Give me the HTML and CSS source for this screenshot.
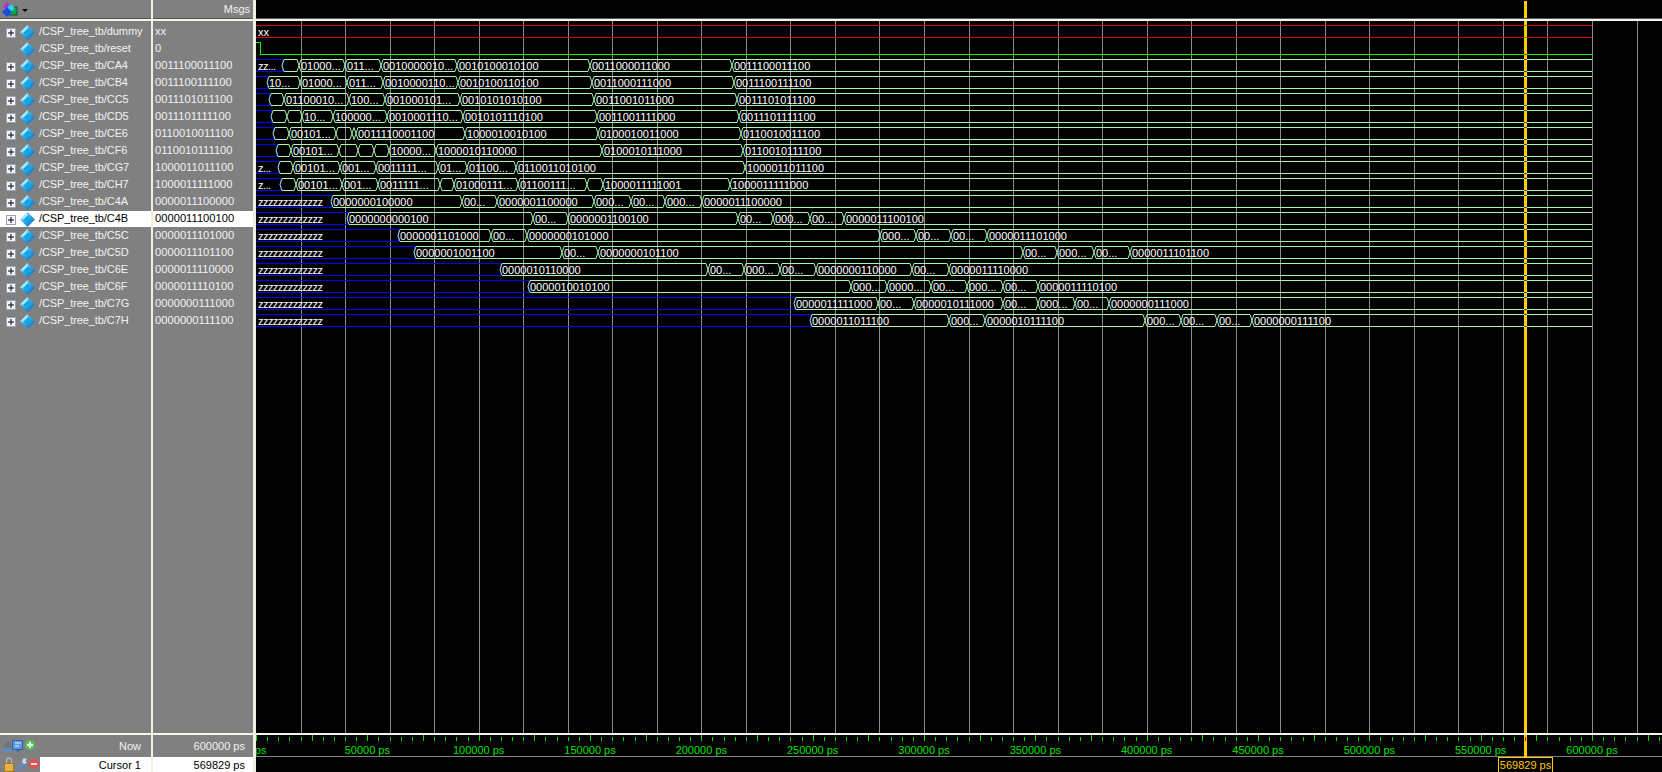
FILE: index.html
```html
<!DOCTYPE html>
<html>
<head>
<meta charset="utf-8">
<title>Wave</title>
<link rel="stylesheet" href="styles.css">
</head>
<body>

<svg class="defs" width="0" height="0">
  <defs>
    <linearGradient id="gem" x1="0" y1="0" x2="1" y2="1">
      <stop offset="0" stop-color="#9be8ff"/>
      <stop offset="0.5" stop-color="#2aa6e8"/>
      <stop offset="1" stop-color="#0a5fb0"/>
    </linearGradient>
    <symbol id="diamond" viewBox="0 0 15 15">
      <path d="M7.5 0 15 7.5 7.5 15 0 7.5z" fill="url(#gem)"/>
      <path d="M7.5 3.5 11.5 7.5 7.5 11.5 3.5 7.5z" fill="#19a4e4"/>
      <path d="M7.5 0 0 7.5 3.5 7.5 7.5 3.5z" fill="#a6ecff"/>
    </symbol>
    <symbol id="plus" viewBox="0 0 10 10">
      <rect x="0.5" y="0.5" width="9" height="9" fill="#f4f6fb" stroke="#9aa0b4"/>
      <path d="M2 5h6M5 2v6" stroke="#000" fill="none"/>
    </symbol>
  </defs>
</svg>

<div class="window">

  <div class="col names">
    <div class="head">
      <svg class="logo" width="18" height="18" viewBox="0 0 18 18">
        <rect x="8" y="6" width="8" height="8" fill="#18a050" stroke="#0a5a28"/>
        <path d="M6 1 11 6 6 9 2 6z" fill="#b030d0"/>
        <circle cx="10" cy="7" r="3" fill="#20d8f0"/>
        <path d="M6 6 11 11 6 16 1 11z" fill="#1a50e0"/>
      </svg>
      <span class="caret"></span>
    </div>
    <div class="list">
      <div class="row"><svg class="plus"><use href="#plus"/></svg><svg class="sig"><use href="#diamond"/></svg>/CSP_tree_tb/dummy</div>
      <div class="row"><span class="noplus"></span><svg class="sig"><use href="#diamond"/></svg>/CSP_tree_tb/reset</div>
      <div class="row"><svg class="plus"><use href="#plus"/></svg><svg class="sig"><use href="#diamond"/></svg>/CSP_tree_tb/CA4</div>
      <div class="row"><svg class="plus"><use href="#plus"/></svg><svg class="sig"><use href="#diamond"/></svg>/CSP_tree_tb/CB4</div>
      <div class="row"><svg class="plus"><use href="#plus"/></svg><svg class="sig"><use href="#diamond"/></svg>/CSP_tree_tb/CC5</div>
      <div class="row"><svg class="plus"><use href="#plus"/></svg><svg class="sig"><use href="#diamond"/></svg>/CSP_tree_tb/CD5</div>
      <div class="row"><svg class="plus"><use href="#plus"/></svg><svg class="sig"><use href="#diamond"/></svg>/CSP_tree_tb/CE6</div>
      <div class="row"><svg class="plus"><use href="#plus"/></svg><svg class="sig"><use href="#diamond"/></svg>/CSP_tree_tb/CF6</div>
      <div class="row"><svg class="plus"><use href="#plus"/></svg><svg class="sig"><use href="#diamond"/></svg>/CSP_tree_tb/CG7</div>
      <div class="row"><svg class="plus"><use href="#plus"/></svg><svg class="sig"><use href="#diamond"/></svg>/CSP_tree_tb/CH7</div>
      <div class="row"><svg class="plus"><use href="#plus"/></svg><svg class="sig"><use href="#diamond"/></svg>/CSP_tree_tb/C4A</div>
      <div class="row selected"><svg class="plus"><use href="#plus"/></svg><svg class="sig"><use href="#diamond"/></svg>/CSP_tree_tb/C4B</div>
      <div class="row"><svg class="plus"><use href="#plus"/></svg><svg class="sig"><use href="#diamond"/></svg>/CSP_tree_tb/C5C</div>
      <div class="row"><svg class="plus"><use href="#plus"/></svg><svg class="sig"><use href="#diamond"/></svg>/CSP_tree_tb/C5D</div>
      <div class="row"><svg class="plus"><use href="#plus"/></svg><svg class="sig"><use href="#diamond"/></svg>/CSP_tree_tb/C6E</div>
      <div class="row"><svg class="plus"><use href="#plus"/></svg><svg class="sig"><use href="#diamond"/></svg>/CSP_tree_tb/C6F</div>
      <div class="row"><svg class="plus"><use href="#plus"/></svg><svg class="sig"><use href="#diamond"/></svg>/CSP_tree_tb/C7G</div>
      <div class="row"><svg class="plus"><use href="#plus"/></svg><svg class="sig"><use href="#diamond"/></svg>/CSP_tree_tb/C7H</div>
    </div>
    <div class="foot">
      <div class="now">
        <svg class="tools" width="36" height="16" viewBox="0 0 36 16">
          <path d="M3 10 5 5 8 3 11 6 12 10z" fill="#6d7480"/>
          <path d="M2 12.5h10" stroke="#4a90e0" stroke-width="2"/>
          <rect x="12.5" y="2.5" width="10" height="9" fill="#5a9ae0" stroke="#2c62b0"/>
          <path d="M15 5h6M15 8h4" stroke="#e8f0ff"/>
          <path d="M16 12l2 2 2-2z" fill="#2c62b0"/>
          <circle cx="30" cy="7" r="5" fill="#58c058"/>
          <path d="M27 7h6M30 4v6" stroke="#dcf5dc" stroke-width="2"/>
        </svg>
        <span class="now-label">Now</span>
      </div>
      <div class="cur">
        <svg class="tools" width="40" height="15" viewBox="0 0 40 15">
          <rect x="4.5" y="6.5" width="9" height="8" fill="#e8b040" stroke="#a87820"/>
          <path d="M6.5 6V3.5a2.5 2.5 0 0 1 5 0V6" fill="none" stroke="#b0b0b0" stroke-width="1.5"/>
          <path d="M18 13 24 6" stroke="#5a8ad8" stroke-width="3"/>
          <path d="M23 1.5h4L25.5 4l1.5 2-3 1-2-2z" fill="#c8d8f0"/>
          <circle cx="34" cy="7" r="5" fill="#e05050"/>
          <path d="M31 7h6" stroke="#f8dcdc" stroke-width="2"/>
        </svg>
        <span class="cur-label">Cursor 1</span>
      </div>
    </div>
  </div>

  <div class="col values">
    <div class="head msgs">Msgs</div>
    <div class="list">
      <div class="row">xx</div>
      <div class="row">0</div>
      <div class="row">0011100011100</div>
      <div class="row">0011100111100</div>
      <div class="row">0011101011100</div>
      <div class="row">0011101111100</div>
      <div class="row">0110010011100</div>
      <div class="row">0110010111100</div>
      <div class="row">1000011011100</div>
      <div class="row">1000011111000</div>
      <div class="row">0000011100000</div>
      <div class="row selected">0000011100100</div>
      <div class="row">0000011101000</div>
      <div class="row">0000011101100</div>
      <div class="row">0000011110000</div>
      <div class="row">0000011110100</div>
      <div class="row">0000000111000</div>
      <div class="row">0000000111100</div>
    </div>
    <div class="foot">
      <div class="now"><span class="now-label">600000 ps</span></div>
      <div class="cur"><span class="cur-label">569829 ps</span></div>
    </div>
  </div>

  <div class="col wave">
    <div class="head"></div>
    <svg id="waves" class="waves" viewBox="256 21 1406 712"></svg>
    <div class="rule"></div>
    <svg id="ruler" class="ruler" viewBox="256 735 1406 37"></svg>
  </div>

  <div class="cursor"></div>
  <div class="flag">569829 ps</div>
</div>

<script src="waves.js"></script>
</body>
</html>
```

FILE: styles.css
```css
*{
  box-sizing:border-box;
}

body{
  margin:0;
  background:#000000;
  font-family:"Liberation Sans",Arial,sans-serif;
  font-size:11px;
  overflow:hidden;
}

.defs{
  position:absolute;
}

.window{
  position:relative;
  display:grid;
  grid-template-columns:151px 2px 100px 3px 1fr;
  width:1662px;
  height:772px;
  background:#f0efe2;
}

.col{
  display:flex;
  flex-direction:column;
  height:772px;
}

.names{
  grid-column:1;
  background:#808080;
  color:#f2f2f2;
}

.values{
  grid-column:3;
  background:#808080;
  color:#f2f2f2;
}

.wave{
  grid-column:5;
  background:#000000;
}

.head{
  display:flex;
  align-items:center;
  height:21px;
  border-bottom:2px solid #f4f4ec;
  box-shadow:inset 0 -1px 0 #555555;
}

.wave .head{
  position:relative;
  z-index:2;
}

.logo{
  margin-left:1px;
}

.caret{
  width:0;
  height:0;
  margin:2px 0 0 3px;
  border-left:3px solid transparent;
  border-right:3px solid transparent;
  border-top:3px solid #000000;
}

.msgs{
  justify-content:flex-end;
  padding:0 3px 2px 0;
  font-size:11px;
}

.list{
  flex:1;
  padding-top:3px;
}

.row{
  display:flex;
  align-items:center;
  height:17px;
  padding-bottom:3px;
  line-height:14px;
  white-space:nowrap;
}

.names .row{
  font-size:11px;
  letter-spacing:-0.1px;
}

.plus{
  flex:none;
  width:10px;
  height:10px;
  margin:4px 0 0 6px;
}

.noplus{
  flex:none;
  width:16px;
}

.sig{
  flex:none;
  width:15px;
  height:15px;
  margin:2px 4px 0 4px;
}

.values .row{
  padding-left:2px;
  font-size:11.2px;
}

.row.selected{
  background:linear-gradient(#ffffff,#ffffff) no-repeat 0 0/100% 16px;
  color:#000000;
}

.foot{
  height:39px;
  border-top:2px solid #f4f4ec;
}

.now{
  display:flex;
  align-items:center;
  justify-content:space-between;
  height:22px;
  padding-right:10px;
}

.cur{
  display:flex;
  align-items:center;
  justify-content:space-between;
  height:15px;
  padding-right:10px;
  background:#808080;
}

.names .cur{
  background:linear-gradient(to right,#808080 40px,#ffffff 40px);
  color:#000000;
}

.values .cur{
  background:#ffffff;
  color:#000000;
}

.values .now,
.values .cur{
  justify-content:flex-end;
  padding-right:8px;
}

.tools{
  flex:none;
}

.waves{
  position:relative;
  z-index:2;
  display:block;
  flex:none;
  width:1406px;
  height:712px;
}

.rule{
  position:relative;
  z-index:2;
  flex:none;
  height:2px;
  background:#f4f4ec;
}

.ruler{
  display:block;
  flex:none;
  width:1406px;
  height:37px;
}

.waves text,
.ruler text{
  font-family:"Liberation Sans",Arial,sans-serif;
}

.cursor{
  position:absolute;
  z-index:1;
  left:1524px;
  top:1px;
  width:3px;
  height:756px;
  background:#ffcc00;
}

.cursor::after{
  content:"";
  position:absolute;
  left:1px;
  top:736px;
  width:1px;
  height:4px;
  background:#e00000;
}

.flag{
  position:absolute;
  z-index:1;
  left:1498px;
  top:757px;
  width:55px;
  height:15px;
  border:1px solid #ffcc00;
  border-bottom:0;
  color:#ffcc00;
  font-size:11px;
  line-height:14px;
  text-align:center;
}
```

FILE: waves.js
```js
// waveform data, x values are page pixels
var X0 = 256, X1 = 1592, PX = 1336 / 600000;
var ROW = 17, TOP = 25, H = 12;

// [row, end of z, z label, [next edge, label], ...]; the last label runs to the end
var buses = [
  [2, 282, "zz...", [299,""], [345,"01000..."], [381,"011..."], [457,"0010000010..."], [590,"0010100010100"], [732,"0011000011000"], [X1,"0011100011100"]],
  [3, 267, "", [300,"10..."], [347,"01000..."], [383,"011..."], [458,"0010000110..."], [592,"0010100110100"], [734,"0011000111000"], [X1,"0011100111100"]],
  [4, 269, "", [284,""], [349,"01100010..."], [385,"100..."], [460,"001000101..."], [594,"0010101010100"], [737,"0011001011000"], [X1,"0011101011100"]],
  [5, 271, "", [287,""], [302,""], [333,"10..."], [387,"100000..."], [463,"0010001110..."], [597,"0010101110100"], [739,"0011001111000"], [X1,"0011101111100"]],
  [6, 273, "", [289,""], [336,"00101..."], [352,""], [356,""], [465,"0011110001100"], [598,"1000010010100"], [741,"0100010011000"], [X1,"0110010011100"]],
  [7, 276, "", [291,""], [339,"00101..."], [358,""], [374,""], [389,""], [436,"10000..."], [602,"1000010110000"], [743,"0100010111000"], [X1,"0110010111100"]],
  [8, 278, "z...", [293,""], [340,"00101..."], [376,"001..."], [438,"0011111..."], [467,"01..."], [516,"01100..."], [745,"0110011010100"], [X1,"1000011011100"]],
  [9, 280, "z...", [296,""], [342,"00101..."], [378,"001..."], [440,"0011111..."], [454,""], [518,"01000111..."], [587,"01100111..."], [603,""], [730,"1000011111001"], [X1,"1000011111000"]],
  [10, 331, "zzzzzzzzzzzzz", [462,"0000000100000"], [497,"00..."], [594,"0000001100000"], [631,"000..."], [665,"00..."], [702,"000..."], [X1,"0000011100000"]],
  [11, 347, "zzzzzzzzzzzzz", [533,"0000000000100"], [568,"00..."], [738,"0000001100100"], [773,"00..."], [810,"000..."], [844,"00..."], [X1,"0000011100100"]],
  [12, 398, "zzzzzzzzzzzzz", [491,"0000001101000"], [527,"00..."], [880,"0000000101000"], [916,"000..."], [951,"00..."], [987,"00..."], [X1,"0000011101000"]],
  [13, 414, "zzzzzzzzzzzzz", [562,"0000001001100"], [598,"00..."], [1023,"0000000101100"], [1057,"00..."], [1094,"000..."], [1130,"00..."], [X1,"0000011101100"]],
  [14, 500, "zzzzzzzzzzzzz", [708,"0000010110000"], [744,"00..."], [780,"000..."], [816,"00..."], [912,"0000000110000"], [949,"00..."], [X1,"0000011110000"]],
  [15, 528, "zzzzzzzzzzzzz", [851,"0000010010100"], [887,"000..."], [931,"0000..."], [967,"00..."], [1003,"000..."], [1038,"00..."], [X1,"0000011110100"]],
  [16, 794, "zzzzzzzzzzzzz", [878,"0000011111000"], [914,"00..."], [1003,"0000010111000"], [1038,"00..."], [1075,"000..."], [1109,"00..."], [X1,"0000000111000"]],
  [17, 810, "zzzzzzzzzzzzz", [949,"0000011011100"], [985,"000..."], [1145,"0000010111100"], [1181,"000..."], [1217,"00..."], [1252,"00..."], [X1,"0000000111100"]]
];

var waves = "", ruler = "";

function line(x1, y1, x2, y2, color){
  return '<path d="M' + x1 + ' ' + y1 + 'L' + x2 + ' ' + y2 + '" stroke="' + color + '" fill="none" shape-rendering="crispEdges"/>';
}

function label(x, y, s){
  if(s == "") return "";
  var tight = s.charAt(0) == "z" ? ' letter-spacing="-0.55"' : '';
  return '<text x="' + x + '" y="' + y + '" font-size="11"' + tight + ' fill="#ffffff">' + s + '</text>';
}

function edge(d){
  return '<path d="' + d + '" stroke="#aaf5aa" fill="none"/>';
}

// grid lines every 20000 ps
for(var k = 1; k <= 31; k++){
  var gx = Math.round(X0 + k * 20000 * PX) + 0.5;
  waves += line(gx, 21, gx, 733, "#8c8c8c");
}

// dummy and reset
waves += line(X0, 25.5, X1, 25.5, "#e00000") + line(X0, 37.5, X1, 37.5, "#e00000") + label(258, 36, "xx");
waves += '<path d="M256 42.5H260.5V54.5H' + X1 + '" stroke="#00ff00" fill="none" shape-rendering="crispEdges"/>';

for(var i = 0; i < buses.length; i++){
  var b = buses[i];
  var yTop = TOP + b[0] * ROW + 0.5, yBot = yTop + H, yMid = yTop + H / 2;

  waves += '<path d="M' + X0 + ' ' + yTop + 'H' + b[1] + 'V' + yBot + 'H' + X0 + '" stroke="#0000ff" fill="none" shape-rendering="crispEdges"/>';
  waves += label(258, yBot - 1.5, b[2]);

  var a = b[1];
  for(var j = 3; j < b.length; j++){
    var e = b[j][0];
    if(e == X1){
      waves += edge('M' + a + ' ' + yMid + 'L' + (a + 2) + ' ' + yTop + 'H' + e + 'M' + e + ' ' + yBot + 'H' + (a + 2) + 'L' + a + ' ' + yMid);
    }else{
      waves += edge('M' + a + ' ' + yMid + 'L' + (a + 2) + ' ' + yTop + 'H' + (e - 2) + 'L' + e + ' ' + yMid + 'L' + (e - 2) + ' ' + yBot + 'H' + (a + 2) + 'Z');
    }
    waves += label(a + 2, yBot - 1.5, b[j][1]);
    a = e;
  }
}

// small marks where signal lines cross the cursor
for(var m = 0; m < 18; m++){
  var mark = m < 1 ? "#00c000" : "#4040d0";
  if(m == 1){
    waves += '<rect x="1524" y="54" width="3" height="1" fill="#e00000"/>';
  }else{
    waves += '<rect x="1524" y="' + (TOP + m * ROW) + '" width="3" height="1" fill="' + mark + '"/>';
    waves += '<rect x="1524" y="' + (TOP + m * ROW + H) + '" width="3" height="1" fill="' + mark + '"/>';
  }
}

// ruler
for(var t = 0; t <= 630000; t += 5000){
  var rx = Math.round(X0 + t * PX) + 0.5;
  ruler += line(rx, t % 25000 == 0 ? 735 : 737, rx, 741, "#00e000");
}
for(var n = 0; n <= 600000; n += 50000){
  ruler += '<text x="' + (X0 + n * PX) + '" y="754" font-size="11" text-anchor="middle" fill="#00e000">' + n + ' ps</text>';
}
ruler += line(256, 756.5, 1662, 756.5, "#808080");

document.getElementById("waves").innerHTML = waves;
document.getElementById("ruler").innerHTML = ruler;
```
